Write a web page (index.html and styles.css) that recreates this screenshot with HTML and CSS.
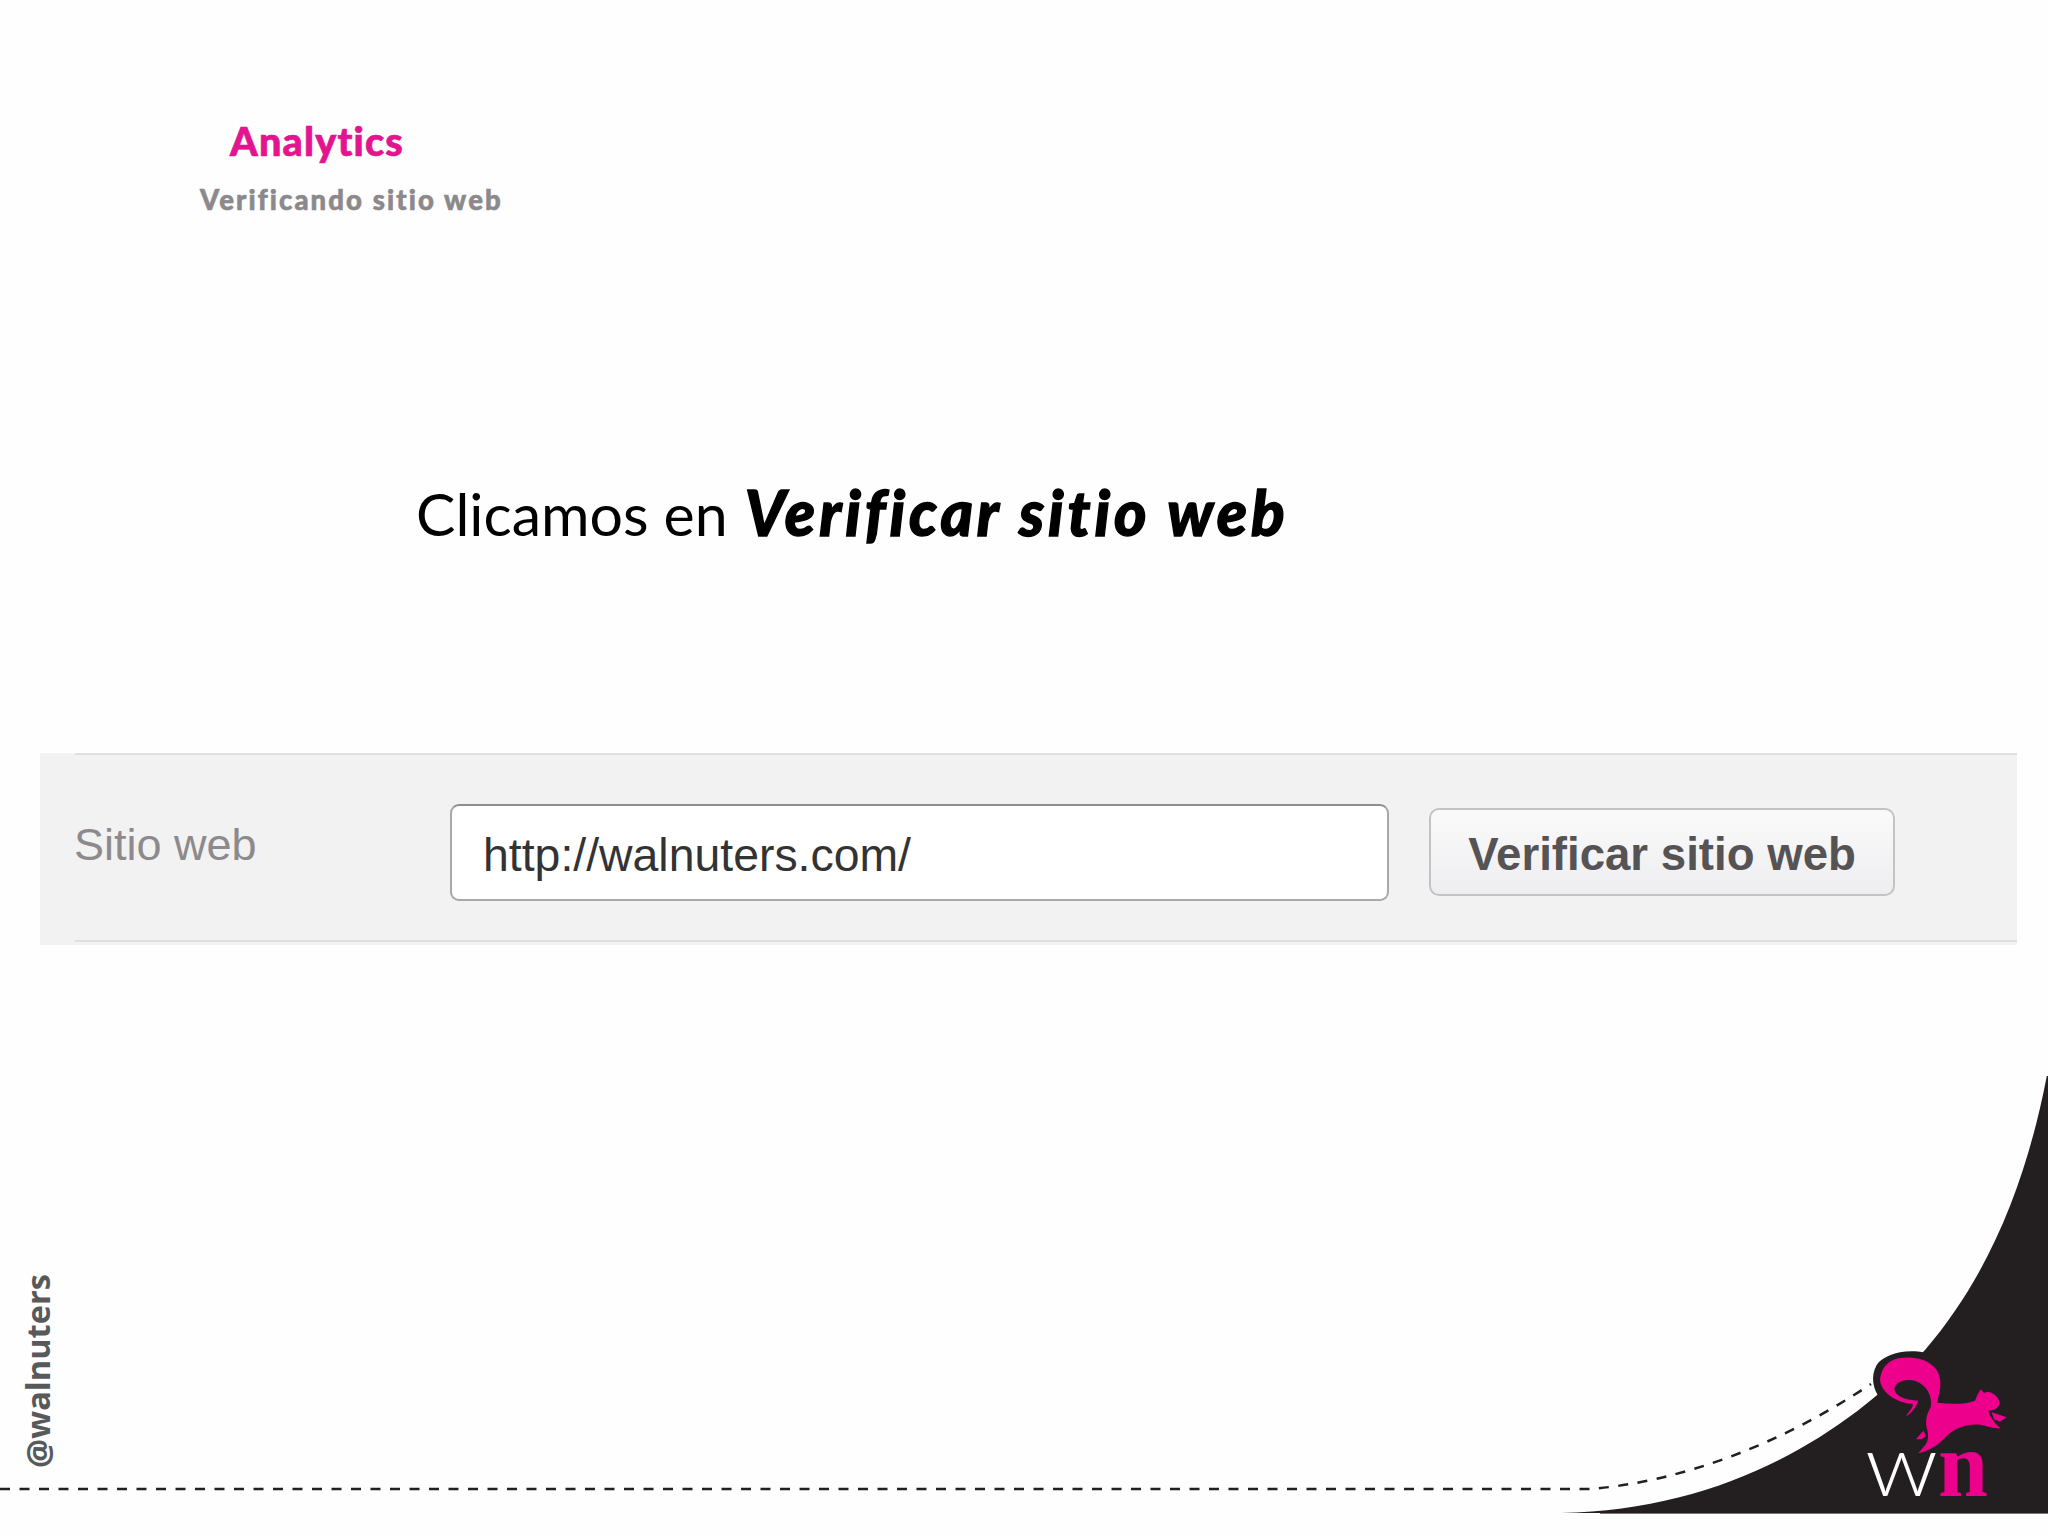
FILE: index.html
```html
<!DOCTYPE html>
<html lang="es">
<head>
<meta charset="utf-8">
<title>Analytics</title>
<link rel="stylesheet" href="styles.css">
</head>
<body>
<main class="slide">
  <header class="head">
    <h1 class="title">Analytics</h1>
    <h2 class="subtitle">Verificando sitio web</h2>
  </header>
  <p class="lead">Clicamos en <strong class="lead-strong">Verificar sitio web</strong></p>
  <section class="strip">
    <div class="row">
      <span class="label">Sitio web</span>
      <div class="field">http://walnuters.com/</div>
      <div class="btn">Verificar sitio web</div>
    </div>
  </section>
  <footer class="foot">
    <span class="handle">@walnuters</span>
    <svg class="art" viewBox="0 1076 2048 460" width="2048" height="460" aria-hidden="true">
      <path class="dash" d="M0 1489 L1590 1489 C1680 1482 1780 1445 1871 1384"/>
      <path class="ink" d="M1561 1513 C1720 1510 1840 1440 1925 1350 C1985 1280 2025 1190 2047 1075 L2048 1075 L2048 1513 Z"/>
      <line class="edge" x1="1600" y1="1513.5" x2="2048" y2="1513.5"/>
      <g transform="translate(1840 1330) scale(.33333)">
        <path class="ink" d="M120 205 C100 180 90 140 110 105 C130 75 190 55 255 68 L320 80 L320 260 Z"/>
        <path class="pink" d="M120 150 C122 120 140 92 175 85 C215 78 265 85 290 120 C305 145 303 175 295 200 L292 218 C330 222 370 225 405 212 L412 195 L422 178 L432 188 L445 185 C465 190 480 205 478 222 C476 235 460 242 445 242 C450 262 465 280 482 295 C470 297 445 290 425 285 C390 280 350 290 320 318 C300 340 275 360 235 370 L250 352 C262 340 268 325 262 300 C255 280 258 255 272 232 C278 200 262 165 225 152 C195 145 165 155 163 178 C165 195 190 208 215 210 L235 212 C228 232 215 250 198 258 C205 245 220 235 218 222 C180 220 125 195 120 150 Z"/>
        <path class="pink" d="M228 328 L250 302 L258 318 L245 328 Z"/>
        <path class="pink" d="M455 247 L500 262 L480 275 L462 268 Z"/>
      </g>
      <text class="logo-w" x="1865" y="1496" textLength="73" lengthAdjust="spacingAndGlyphs">w</text>
      <text class="logo-n" x="1938" y="1496" textLength="50" lengthAdjust="spacingAndGlyphs">n</text>
    </svg>
  </footer>
</main>
</body>
</html>
```

FILE: styles.css
```css
html, body { margin: 0; padding: 0; background: #fefefe; }
.slide {
  position: relative;
  width: 2048px;
  height: 1536px;
  display: flex;
  flex-direction: column;
  overflow: hidden;
  font-family: "Lato", "Liberation Sans", sans-serif;
  font-variant-ligatures: none;
}
.head { padding-top: 119px; }
.title {
  margin: 0 0 0 230px;
  font-size: 39.5px;
  line-height: 44px;
  font-weight: 900;
  letter-spacing: 1.2px;
  -webkit-text-stroke: .7px #e3148f;
  color: #e3148f;
}
.subtitle {
  margin: 20px 0 0 200px;
  font-size: 27.5px;
  line-height: 34px;
  font-weight: 900;
  letter-spacing: 2.1px;
  -webkit-text-stroke: .6px #8b898c;
  color: #8b898c;
}
.lead {
  margin: 259px 0 0 416px;
  font-size: 59px;
  line-height: 72px;
  color: #000;
  white-space: nowrap;
}
.lead-strong {
  margin-left: 2px;
  font-size: 62px;
  font-weight: 900;
  font-style: italic;
  letter-spacing: 3.9px;
  -webkit-text-stroke: 1.3px #000;
}
.strip {
  margin: 203px 0 0 40px;
  width: 1977px;
  height: 192px;
  background: #f3f2f3;
}
.row {
  margin-left: 35px;
  height: 189px;
  box-sizing: border-box;
  border-top: 2px solid #e0dee0;
  border-bottom: 2px solid #e0dee0;
  padding-top: 49px;
  display: flex;
  align-items: flex-start;
  font-family: "Liberation Sans", Arial, sans-serif;
  font-size: 46.4px;
}
.label {
  width: 375px;
  flex: none;
  font-size: 45px;
  line-height: 52px;
  margin: 15px 0 0 -1px;
  color: #8c8a8c;
}
.field {
  box-sizing: border-box;
  width: 939px;
  height: 97px;
  flex: none;
  margin-left: 1px;
  padding-left: 31px;
  line-height: 99px;
  background: #fff;
  border: 2px solid #a9a7a9;
  border-top-color: #8f8d8f;
  border-radius: 9px;
  color: #333;
}
.btn {
  box-sizing: border-box;
  width: 466px;
  height: 88px;
  flex: none;
  margin: 4px 0 0 40px;
  font-size: 45.6px;
  line-height: 90px;
  text-align: center;
  font-weight: 700;
  color: #555354;
  background: linear-gradient(#fbfafb, #eeedef);
  border: 2px solid #c4c2c4;
  border-radius: 10px;
}
.foot {
  margin-top: auto;
  height: 460px;
  position: relative;
}
.art { display: block; }
.handle {
  position: absolute;
  left: 18px;
  bottom: 68px;
  writing-mode: vertical-rl;
  transform: rotate(180deg);
  font-family: "Open Sans", "Liberation Sans", sans-serif;
  font-weight: 700;
  font-size: 32.6px;
  line-height: 40px;
  color: #58595b;
}
.dash { fill: none; stroke: #231f20; stroke-width: 2.5; stroke-dasharray: 10 9.5; }
.ink { fill: #231f20; }
.edge { stroke: #77757a; stroke-width: 1; }
.pink { fill: #ec008c; }
.logo-w { font-family: "Lato", sans-serif; font-weight: 300; font-size: 87px; fill: #fff; }
.logo-n { font-family: "Liberation Serif", serif; font-weight: 700; font-size: 93px; fill: #ec008c; }
```
